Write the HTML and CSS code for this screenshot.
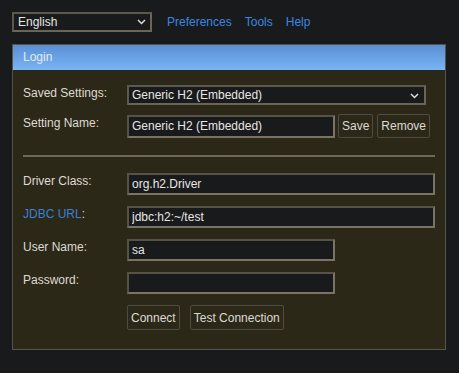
FILE: index.html
```html
<!DOCTYPE html>
<html lang="en">
<head>
    <meta charset="UTF-8">
    <meta name="viewport" content="width=device-width, initial-scale=1.0">
    <title>H2 Console</title>
    <link rel="stylesheet" href="styles.css">
</head>
<body>
    <div class="top-bar">
        <div class="select-wrap lang-select">
            <select class="select">
                <option>English</option>
            </select>
            <svg class="chevron" width="9" height="6" viewBox="0 0 9 6"><path d="M1 1 L4.5 4.5 L8 1" fill="none" stroke="#e0ddd8" stroke-width="1.5"/></svg>
        </div>
        <a href="#" class="link first">Preferences</a>
        <a href="#" class="link">Tools</a>
        <a href="#" class="link">Help</a>
    </div>

    <div class="login-panel">
        <div class="login-header">Login</div>
        <div class="login-body">
            <div class="form-row">
                <label class="label">Saved Settings:</label>
                <div class="select-wrap settings-select">
                    <select class="select">
                        <option>Generic H2 (Embedded)</option>
                    </select>
                    <svg class="chevron" width="9" height="6" viewBox="0 0 9 6"><path d="M1 1 L4.5 4.5 L8 1" fill="none" stroke="#e0ddd8" stroke-width="1.5"/></svg>
                </div>
            </div>
            <div class="form-row">
                <label class="label">Setting Name:</label>
                <div class="field-group">
                    <input type="text" class="input input-short" value="Generic H2 (Embedded)">
                    <button class="btn">Save</button>
                    <button class="btn">Remove</button>
                </div>
            </div>

            <hr class="divider">

            <div class="form-grid">
                <label class="label">Driver Class:</label>
                <input type="text" class="input input-long" value="org.h2.Driver">

                <label class="label"><a href="#" class="link">JDBC URL</a>:</label>
                <input type="text" class="input input-long" value="jdbc:h2:~/test">

                <label class="label">User Name:</label>
                <input type="text" class="input input-short" value="sa">

                <label class="label">Password:</label>
                <input type="password" class="input input-short" value="">

                <span></span>
                <div class="actions">
                    <button class="btn btn-tall">Connect</button>
                    <button class="btn btn-tall">Test Connection</button>
                </div>
            </div>
        </div>
    </div>
</body>
</html>
```

FILE: styles.css
```css
* {
    margin: 0;
    padding: 0;
    box-sizing: border-box;
    font-family: 'Liberation Sans', Arial, sans-serif;
}

body {
    background: #181a1b;
    color: #e0ddd8;
    font-size: 12px;
    padding: 12px;
}

.top-bar {
    display: flex;
    align-items: center;
    height: 20px;
}

.link {
    color: #3d86e0;
    text-decoration: none;
    font-size: 12px;
    margin-left: 13px;
}

.link.first {
    margin-left: 15px;
}

.label .link {
    margin-left: 0;
    color: #3b7fd6;
}

.select-wrap {
    position: relative;
    display: inline-block;
}

.select {
    appearance: none;
    -webkit-appearance: none;
    width: 100%;
    height: 100%;
    background: #181a1b;
    color: #e8e6e3;
    font-size: 12px;
    border: 2px solid #6b6458;
    border-top-color: #5e584c;
    border-left-color: #5e584c;
    padding: 0 4px;
    outline: none;
}

.lang-select {
    width: 140px;
    height: 20px;
}

.settings-select {
    width: 299px;
    height: 20px;
}

.settings-select .select {
    padding-left: 3px;
}

.chevron {
    position: absolute;
    right: 6px;
    top: 7px;
}

.settings-select .chevron {
    right: 7px;
    top: 8px;
}

.login-panel {
    width: 434px;
    margin-top: 12px;
    background: #2c2817;
    border: 1px solid #57534a;
}

.login-header {
    height: 25px;
    line-height: 25px;
    padding-left: 10px;
    color: #e4ebf4;
    font-size: 12px;
    background: linear-gradient(to bottom, #5a8ed4 0%, #7ab5f5 100%);
}

.login-body {
    padding: 15px 10px 19px 10px;
}

.form-row {
    display: flex;
    align-items: flex-start;
    margin-bottom: 10px;
}

.label {
    width: 104px;
    flex-shrink: 0;
    line-height: 14px;
    color: #dedad4;
    padding-top: 1px;
}

.field-group {
    display: flex;
    align-items: center;
    margin-top: -1px;
}

.input {
    height: 23px;
    background: #181a1b;
    color: #e8e6e3;
    font-size: 12px;
    border: 2px solid #7a7366;
    border-top-color: #585246;
    border-left-color: #585246;
    padding: 0 3px;
    outline: none;
}

.input-short {
    width: 208px;
}

.input-long {
    width: 308px;
}

.btn {
    height: 24px;
    padding: 0 3px;
    margin-left: 4px;
    background: transparent;
    color: #dedad4;
    font-size: 12px;
    border: 1px solid #4f4b41;
    border-radius: 2px;
}

.field-group .input {
    margin-right: -1px;
}

.divider {
    border: none;
    height: 2px;
    background: #6e675b;
    width: 412px;
    margin: 17px 0 16px 0;
}

.form-grid {
    display: grid;
    grid-template-columns: 104px auto;
    row-gap: 11px;
    align-items: start;
}

.form-grid .input {
    height: 22px;
}

.actions {
    display: flex;
    gap: 10px;
}

.actions .btn {
    margin-left: 0;
}

.btn-tall {
    height: 25px;
}
```
